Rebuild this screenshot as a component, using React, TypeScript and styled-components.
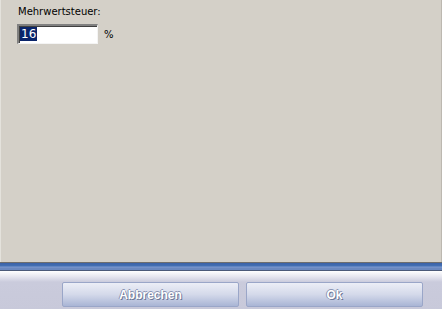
import { FC } from "react";
import styled, { createGlobalStyle } from "styled-components";

const GlobalStyle = createGlobalStyle`
  html, body {
    margin: 0;
    padding: 0;
    width: 442px;
    height: 309px;
    overflow: hidden;
  }
`;

const Window = styled.div`
  display: flex;
  flex-direction: column;
  width: 442px;
  height: 309px;
  font-family: "DejaVu Sans", "Liberation Sans", sans-serif;
`;

const Content = styled.main`
  flex: 0 0 262px;
  box-sizing: border-box;
  background: #d4d0c8;
  border-left: 1px solid #e4e2dc;
  border-right: 1px solid #bcb8b0;
  padding: 6px 0 0 16px;
`;

const Label = styled.div`
  font-size: 10px;
  color: #000;
  margin-left: 1px;
  line-height: 12px;
`;

const FieldRow = styled.div`
  display: flex;
  align-items: center;
  gap: 6px;
  margin-top: 6px;
`;

const Input = styled.div`
  box-sizing: border-box;
  width: 81px;
  height: 20px;
  background: #fff;
  border-top: 2px solid #808080;
  border-left: 2px solid #808080;
  border-bottom: 1px solid #f4f4f4;
  border-right: 1px solid #f4f4f4;
  box-shadow: inset 1px 1px 0 #404040;
  padding: 1px 0 0 1px;
  font-size: 12px;
  line-height: 15px;
`;

const Selected = styled.span`
  background: #0a246a;
  color: #fff;
  padding: 0 1px;
`;

const Unit = styled.span`
  font-size: 10px;
  margin-top: 1px;
`;

const Separator = styled.div`
  height: 7px;
  border-top: 1px solid #6e6e6e;
  border-bottom: 1px solid #4c5a78;
  background: linear-gradient(#3a62a8 0px, #4470b4 3px, #7e9ad0 4px, #6a88c0 5px);
`;

const Footer = styled.footer`
  flex: 1;
  display: flex;
  justify-content: flex-end;
  align-items: flex-start;
  gap: 7px;
  padding: 11px 19px 0 0;
  background: linear-gradient(#ffffff 0px, #e4e4ee 6px, #cacbdc 11px, #c8c9da 100%);
`;

const Button = styled.button`
  box-sizing: border-box;
  width: 177px;
  height: 25px;
  border: 1px solid #9aa6c8;
  border-radius: 2px;
  background: linear-gradient(#eceef6 0%, #d4d9ea 50%, #a9b5d5 100%);
  color: #fff;
  font-family: "Liberation Sans", "DejaVu Sans", sans-serif;
  font-weight: bold;
  font-size: 12px;
  text-shadow: 1px 1px 0 #6c7898, -1px 0 0 #8c96b4, 0 -1px 0 #8c96b4;
  padding: 0;
`;

const App: FC = () => (
  <>
    <GlobalStyle />
    <Window>
      <Content>
        <Label>Mehrwertsteuer:</Label>
        <FieldRow>
          <Input>
            <Selected>16</Selected>
          </Input>
          <Unit>%</Unit>
        </FieldRow>
      </Content>
      <Separator />
      <Footer>
        <Button>Abbrechen</Button>
        <Button>Ok</Button>
      </Footer>
    </Window>
  </>
);

export default App;
